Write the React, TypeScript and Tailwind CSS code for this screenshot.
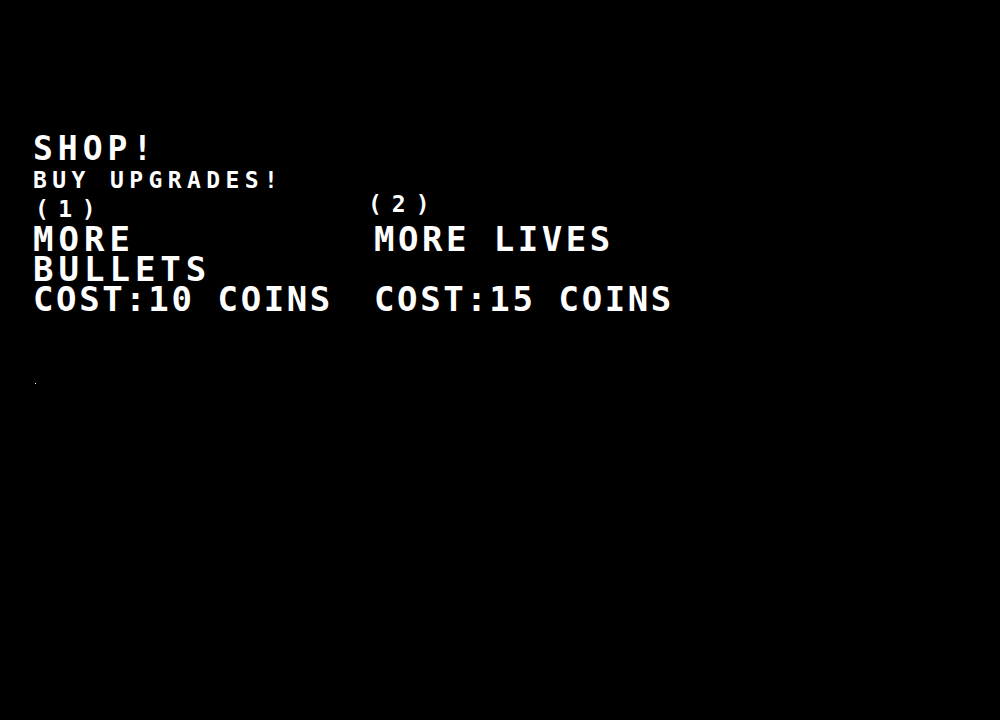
import React from "react";

const mono = { fontFamily: '"DejaVu Sans Mono", "Liberation Mono", monospace' };

export default function App() {
  return (
    <div
      className="w-[1000px] h-[720px] bg-black text-white font-bold overflow-hidden pl-[33px] pt-[132px]"
      style={mono}
    >
      <div className="text-[33px] leading-[34px] tracking-[5px]">SHOP!</div>
      <div className="text-[23px] leading-[28px] tracking-[5.4px]">BUY UPGRADES!</div>
      <div className="grid grid-cols-[341px_auto]">
        <div className="flex flex-col">
          <div className="text-[23px] leading-[30px] tracking-[9.5px] ml-[2px]">(1)</div>
          <div className="text-[34px] leading-[30px] tracking-[5px] h-[60px]">
            MORE
            <br />
            BULLETS
          </div>
          <div className="text-[34px] leading-[30px] tracking-[2.6px]">COST:10 COINS</div>
        </div>
        <div className="flex flex-col">
          <div className="text-[23px] leading-[20px] pb-[10px] tracking-[10px] -ml-[6px]">(2)</div>
          <div className="text-[34px] leading-[30px] tracking-[3.5px] h-[60px]">MORE LIVES</div>
          <div className="text-[34px] leading-[30px] tracking-[2.6px]">COST:15 COINS</div>
        </div>
      </div>
      <div className="mt-[69px] ml-[2px] w-px h-px bg-white" />
    </div>
  );
}
